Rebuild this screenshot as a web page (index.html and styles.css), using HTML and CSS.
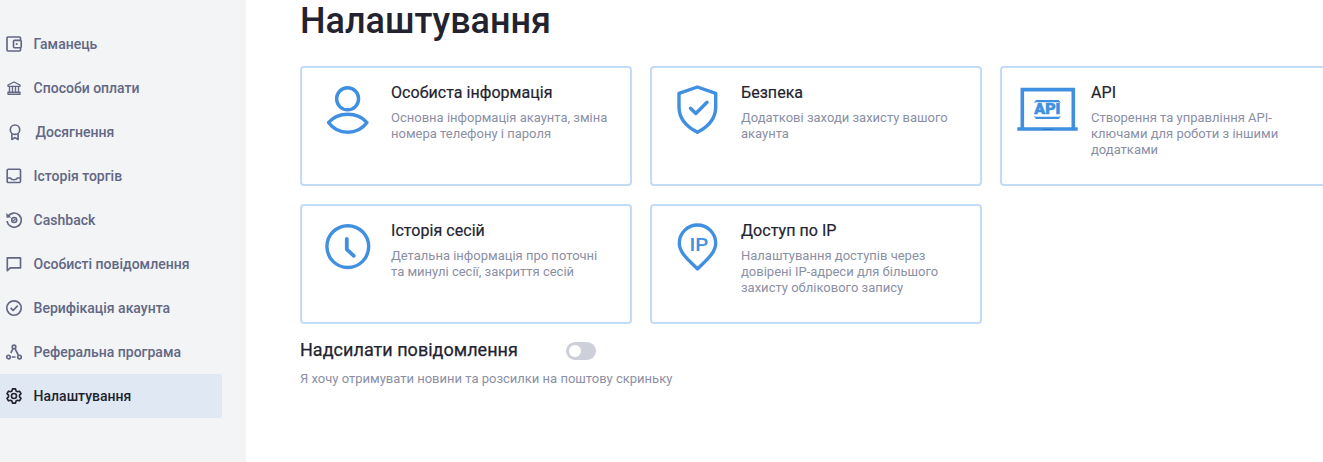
FILE: index.html
```
<!DOCTYPE html>
<html lang="uk">
<head>
<meta charset="utf-8">
<title>Налаштування</title>
<link rel="stylesheet" href="styles.css">
</head>
<body>
<div class="page">
<aside class="sidebar">
<nav class="menu">
<a class="menu-item"><svg class="menu-icon" viewBox="0 0 16 16"><path d="M14.500 4V2a1 1 0 0 0-1-1H2a1 1 0 0 0-1 1v12a1 1 0 0 0 1 1h11.500a1 1 0 0 0 1-1v-2"/><rect x="7.500" y="4.300" width="7.700" height="7.400" rx="1"/><circle class="solid" cx="10.700" cy="8" r="1.100"/></svg><span>Гаманець</span></a>
<a class="menu-item"><svg class="menu-icon fine" viewBox="0 0 16 16"><path d="M2 6.300V5l6-3 6 3v1.300zM3.500 6.500v6M6.500 6.500v6M9.500 6.500v6M12.500 6.500v6M2 12.200h12v2H2z"/></svg><span>Способи оплати</span></a>
<a class="menu-item shifted"><svg class="menu-icon" viewBox="0 0 16 16"><circle cx="9" cy="5.700" r="4.700"/><path d="M5.900 9.500v6L9 13.600l3.100 1.900v-6"/></svg><span>Досягнення</span></a>
<a class="menu-item"><svg class="menu-icon" viewBox="0 0 16 16"><rect x="1.200" y="1.200" width="13.300" height="13.300" rx="1"/><path d="M1.200 10h3.300c.8 2.300 6 2.300 6.800 0h3.200"/></svg><span>Історія торгів</span></a>
<a class="menu-item"><svg class="menu-icon" viewBox="0 0 16 16"><path d="M2 4.600A7.100 7.100 0 1 1 1.100 9"/><path class="solid" d="M.3 1l.2 4.700 4.700-.2z"/><circle cx="8.200" cy="8" r="2.500"/><path class="fine" d="M7.200 9l2-2"/></svg><span>Cashback</span></a>
<a class="menu-item"><svg class="menu-icon" viewBox="0 0 16 16"><path d="M1.300 1.900h13.200v10H4.300l-3 2.700z"/></svg><span>Особисті повідомлення</span></a>
<a class="menu-item"><svg class="menu-icon" viewBox="0 0 16 16"><circle cx="8" cy="8" r="7.200"/><path d="M4.600 7.900l2.500 2.500 4.700-4.700"/></svg><span>Верифікація акаунта</span></a>
<a class="menu-item"><svg class="menu-icon" viewBox="0 0 16 16"><circle cx="8" cy="2.900" r="1.800"/><circle cx="2.500" cy="13" r="1.800"/><circle cx="13.500" cy="13" r="1.800"/><path d="M6.800 5.200L4.800 9M9 4.700l3.300 6.300M5.800 13h3.800"/></svg><span>Реферальна програма</span></a>
<a class="menu-item active"><svg class="menu-icon" viewBox="0 0 16 16"><path d="M6.500 .9h3l.6 2.100 1.300.7 2.100-.5 1.500 2.500L13.500 7.200v1.600l1.500 1.500-1.500 2.500-2.100-.5-1.300.7-.6 2.100h-3l-.6-2.100-1.300-.7-2.100.5L1 10.300l1.500-1.500V7.200L1 5.700l1.500-2.500 2.100.5L5.900 3z"/><circle cx="8" cy="8" r="2.500"/></svg><span>Налаштування</span></a>
</nav>
</aside>
<main class="content">
<h1 class="title">Налаштування</h1>
<div class="cards">
<section class="card"><svg class="card-icon" viewBox="0 0 64 64"><circle cx="31.600" cy="20.800" r="11"/><path d="M12.500 44.500C22 33.500 41.500 33.500 51 44.500C41.500 57.500 22 57.500 12.500 44.500z"/></svg>
<div class="card-text"><h2 class="card-title">Особиста інформація</h2><p class="note">Основна інформація акаунта, зміна<br>номера телефону і пароля</p></div></section>
<section class="card"><svg class="card-icon" viewBox="0 0 64 64"><path d="M31.400 9L13 15.300V29C13 41 20 48.500 31.400 54.300C42.800 48.500 49.700 41 49.700 29V15.300z"/><path d="M24.500 30.200l5.300 5.300L41 24.300"/></svg>
<div class="card-text"><h2 class="card-title">Безпека</h2><p class="note">Додаткові заходи захисту вашого<br>акаунта</p></div></section>
<section class="card"><svg class="card-icon laptop" viewBox="0 0 64 64"><path d="M6.300 50V11.600h51V50M1.300 51h60.400"/><path class="shade" d="M27 51.500h10"/><path class="fill" d="M17.800 25L20 22h22.800l2.200 3-2-.8H19.800zM17.800 38L20 41h22.800l2.200-3-2 .8H19.800z"/><text class="api-label" x="18.300" y="36.400" textLength="26" lengthAdjust="spacingAndGlyphs">API</text></svg>
<div class="card-text"><h2 class="card-title">API</h2><p class="note">Створення та управління API-<br>ключами для роботи з іншими<br>додатками</p></div></section>
<section class="card"><svg class="card-icon" viewBox="0 0 64 64"><circle cx="31.800" cy="30.600" r="20.900"/><path class="hands" d="M30.800 22.800v10.500l7 6.500"/></svg>
<div class="card-text"><h2 class="card-title">Історія сесій</h2><p class="note">Детальна інформація про поточні<br>та минулі сесії, закриття сесій</p></div></section>
<section class="card"><svg class="card-icon" viewBox="0 0 64 64"><path d="M31.500 53C27 47.500 13.300 38.500 13.300 27.200a18.200 18.200 0 0 1 36.400 0C49.700 38.500 36 47.500 31.500 53z"/><text class="ip-label" x="23.500" y="35" textLength="18.800" lengthAdjust="spacingAndGlyphs">IP</text></svg>
<div class="card-text"><h2 class="card-title">Доступ по IP</h2><p class="note">Налаштування доступів через<br>довірені IP-адреси для більшого<br>захисту облікового запису</p></div></section>
</div>
<div class="notify"><h2 class="notify-title">Надсилати повідомлення</h2><span class="toggle"><span class="knob"></span></span></div>
<p class="note">Я хочу отримувати новини та розсилки на поштову скриньку</p>
</main>
</div>
</body>
</html>
```
FILE: styles.css
```
* { box-sizing: border-box; }
body { margin: 0; overflow: hidden; background: #fff; font-family: Roboto, sans-serif; color: #23232f; }
h1, h2, p { margin: 0; }
.page { display: flex; height: 462px; }
.sidebar { flex: 0 0 246px; background: #f2f4f6; padding-top: 22px; }
.menu { display: flex; flex-direction: column; width: 222px; }
.menu-item { display: flex; align-items: center; gap: 11.6px; height: 44px; padding-left: 6px; font-size: 14px; font-weight: 500; color: #626784; white-space: nowrap; }
.menu-item.shifted { gap: 13.6px; }
.menu-item.active { background: #e0e8f4; color: #23232f; border-radius: 0 2px 2px 0; }
.menu-icon { width: 16px; height: 16px; fill: none; stroke: currentColor; stroke-width: 1.65; stroke-linejoin: round; overflow: visible; }
.menu-icon.fine, .menu-icon .fine { stroke-width: 1.35; }
.menu-icon .solid { fill: currentColor; stroke: none; }
.content { flex: 1; min-width: 0; padding-left: 54px; }
.title { font-size: 36px; line-height: 42px; font-weight: 500; white-space: nowrap; }
.cards { display: grid; grid-template-columns: repeat(3, 332px); grid-auto-rows: 120px; gap: 18px; margin-top: 24px; }
.card { display: flex; gap: 11px; padding: 10px 12px 10px 14px; border: 2px solid #c4dbf6; border-radius: 4px; }
.card-icon { flex: 0 0 64px; height: 64px; fill: none; stroke: #408fe0; stroke-width: 3.4; stroke-linejoin: round; stroke-linecap: round; }
.laptop { stroke-linejoin: miter; stroke-linecap: butt; stroke-width: 3.6; }
.fill { fill: #408fe0; stroke: none; }
.shade { stroke: #2878c8; stroke-width: 1; }
.hands { stroke-width: 3.8; }
.api-label, .ip-label { fill: #408fe0; font-family: Roboto, sans-serif; }
.api-label { font-size: 14px; font-weight: 900; stroke: #408fe0; stroke-width: .6; }
.ip-label { font-size: 18px; font-weight: 500; stroke: none; }
.card-text { padding-top: 5px; white-space: nowrap; }
.card-title { font-size: 16px; line-height: 20px; font-weight: 400; margin-bottom: 7px; letter-spacing: .05px; -webkit-text-stroke: .2px; }
.note { font-size: 13px; line-height: 16px; color: #8b8fa5; }
.notify { display: flex; align-items: center; gap: 48px; margin: 16px 0 11px; height: 20px; }
.notify-title { font-size: 18px; line-height: 20px; font-weight: 400; letter-spacing: .03px; white-space: nowrap; -webkit-text-stroke: .25px; }
.toggle { width: 30px; height: 18px; margin-top: 2px; padding: 3px; background: #cdd0d9; border-radius: 9px; }
.knob { display: block; width: 12px; height: 12px; border-radius: 50%; background: #fff; }
```
